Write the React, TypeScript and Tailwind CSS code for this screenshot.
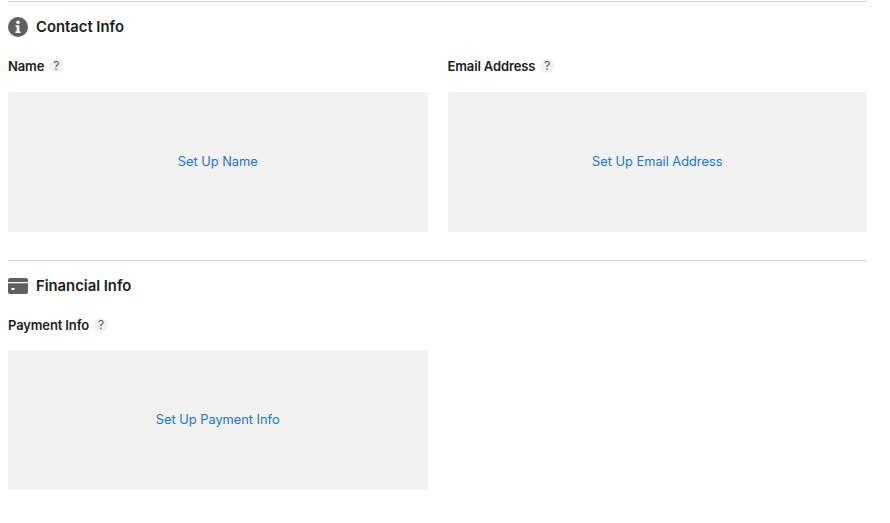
import React from "react";

const HelpBadge = () => (
  <span className="ml-[5px] flex h-[14px] w-[14px] items-center justify-center rounded-full bg-[#f1f1f1] text-[12px] font-normal tracking-normal text-[#555]">
    ?
  </span>
);

const InfoIcon = () => (
  <svg className="h-5 w-5" viewBox="0 0 20 20">
    <circle cx="10" cy="10" r="10" fill="#606060" />
    <circle cx="10" cy="5.2" r="1.7" fill="#fff" />
    <path d="M7.6 8.2h3.700v6h1.200v1.700H7.500v-1.700h1.200v-4.300H7.600z" fill="#fff" />
  </svg>
);

const CardIcon = () => (
  <svg className="h-5 w-5" viewBox="0 0 20 20">
    <path d="M2 2h16a2 2 0 0 1 2 2v2H0V4a2 2 0 0 1 2-2z" fill="#606060" />
    <path d="M0 7.200h20V16a2 2 0 0 1-2 2H2a2 2 0 0 1-2-2z" fill="#606060" />
    <rect x="3.500" y="12" width="3" height="2" rx="0.5" fill="#fff" />
  </svg>
);

const Field = ({ label, action }: { label: string; action: string }) => (
  <div>
    <div className="flex h-5 items-center text-[13px] font-semibold leading-5 tracking-[-0.01em] text-[#1c1c1c]">
      {label}
      <HelpBadge />
    </div>
    <div className="mt-[15.6px] flex h-[140px] items-center justify-center rounded-[3px] bg-[#f2f2f2] pb-[1px] text-[12.8px] text-[#1b74c5]">
      {action}
    </div>
  </div>
);

const Section = ({ icon, title, children }: { icon: React.ReactNode; title: string; children: React.ReactNode }) => (
  <section className="border-t border-[#d6d6d6] pt-[15px]">
    <div className="flex h-5 items-center gap-2 text-[14.8px] font-semibold leading-5 text-[#1c1c1c]">
      {icon}
      {title}
    </div>
    <div className="mt-[19px] grid grid-cols-2 gap-5">{children}</div>
  </section>
);

export default function App() {
  return (
    <div
      className="h-[523px] w-[890px] bg-white pl-2 pr-[23px] pt-[1px]"
      style={{ fontFamily: "Inter, sans-serif" }}
    >
      <div className="flex flex-col gap-7">
        <Section icon={<InfoIcon />} title="Contact Info">
          <Field label="Name" action="Set Up Name" />
          <Field label="Email Address" action="Set Up Email Address" />
        </Section>
        <Section icon={<CardIcon />} title="Financial Info">
          <Field label="Payment Info" action="Set Up Payment Info" />
        </Section>
      </div>
    </div>
  );
}
